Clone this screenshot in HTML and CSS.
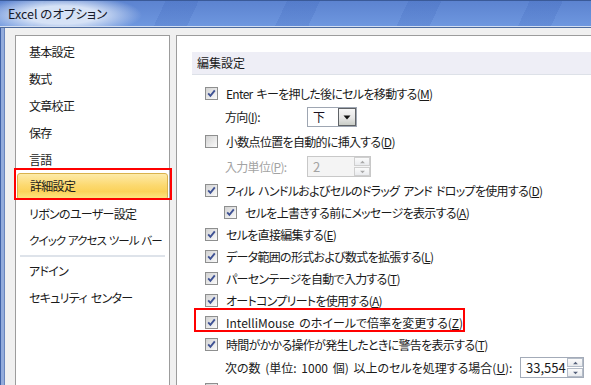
FILE: index.html
```html
<!DOCTYPE html>
<html lang="ja">
<head>
    <meta charset="UTF-8">
    <title>Excel のオプション</title>
    <link rel="stylesheet" href="styles.css">
</head>
<body>
    <div class="window">
        <div class="titlebar">Excel のオプション</div>
        <div class="frame">
            <div class="body">
                <nav class="side">
                    <div class="side-item">基本設定</div>
                    <div class="side-item">数式</div>
                    <div class="side-item">文章校正</div>
                    <div class="side-item">保存</div>
                    <div class="side-item">言語</div>
                    <div class="side-item selected">詳細設定</div>
                    <div class="side-item">リボンのユーザー設定</div>
                    <div class="side-item long">クイック アクセス ツール バー</div>
                    <div class="side-sep"></div>
                    <div class="side-item">アドイン</div>
                    <div class="side-item">セキュリティ センター</div>
                </nav>
                <main class="pane">
                    <div class="section-head">編集設定</div>
                    <div class="options">
                        <div class="row">
                            <span class="cb"><svg viewBox="0 0 11 11"><path d="M2.2 5.4 L4.4 7.8 L8.8 2.4"/></svg></span>
                            <span>Enter キーを押した後にセルを移動する(<u>M</u>)</span>
                        </div>
                        <div class="row tall field">
                            <span class="field-label">方向(<u>I</u>):</span>
                            <div class="select">
                                <span class="select-text">下</span>
                                <span class="select-btn"><svg viewBox="0 0 16 16"><path d="M4.5 6.5 h7 l-3.5 4 z"/></svg></span>
                            </div>
                        </div>
                        <div class="row tall">
                            <span class="cb"></span>
                            <span>小数点位置を自動的に挿入する(<u>D</u>)</span>
                        </div>
                        <div class="row tall field">
                            <span class="field-label disabled">入力単位(<u>P</u>):</span>
                            <div class="spin disabled">
                                <span class="spin-text">2</span>
                                <span class="spin-btns">
                                    <span class="spin-btn"><svg viewBox="0 0 8 5"><path d="M1 4 h6 l-3 -3 z"/></svg></span>
                                    <span class="spin-btn"><svg viewBox="0 0 8 5"><path d="M1 1 h6 l-3 3 z"/></svg></span>
                                </span>
                            </div>
                        </div>
                        <div class="row">
                            <span class="cb"><svg viewBox="0 0 11 11"><path d="M2.2 5.4 L4.4 7.8 L8.8 2.4"/></svg></span>
                            <span>フィル ハンドルおよびセルのドラッグ アンド ドロップを使用する(<u>D</u>)</span>
                        </div>
                        <div class="row indent">
                            <span class="cb"><svg viewBox="0 0 11 11"><path d="M2.2 5.4 L4.4 7.8 L8.8 2.4"/></svg></span>
                            <span>セルを上書きする前にメッセージを表示する(<u>A</u>)</span>
                        </div>
                        <div class="row">
                            <span class="cb"><svg viewBox="0 0 11 11"><path d="M2.2 5.4 L4.4 7.8 L8.8 2.4"/></svg></span>
                            <span>セルを直接編集する(<u>E</u>)</span>
                        </div>
                        <div class="row">
                            <span class="cb"><svg viewBox="0 0 11 11"><path d="M2.2 5.4 L4.4 7.8 L8.8 2.4"/></svg></span>
                            <span>データ範囲の形式および数式を拡張する(<u>L</u>)</span>
                        </div>
                        <div class="row">
                            <span class="cb"><svg viewBox="0 0 11 11"><path d="M2.2 5.4 L4.4 7.8 L8.8 2.4"/></svg></span>
                            <span>パーセンテージを自動で入力する(<u>T</u>)</span>
                        </div>
                        <div class="row">
                            <span class="cb"><svg viewBox="0 0 11 11"><path d="M2.2 5.4 L4.4 7.8 L8.8 2.4"/></svg></span>
                            <span>オートコンプリートを使用する(<u>A</u>)</span>
                        </div>
                        <div class="row marked">
                            <span class="cb"><svg viewBox="0 0 11 11"><path d="M2.2 5.4 L4.4 7.8 L8.8 2.4"/></svg></span>
                            <span class="latin">IntelliMouse のホイールで倍率を変更する(<u>Z</u>)</span>
                        </div>
                        <div class="row">
                            <span class="cb"><svg viewBox="0 0 11 11"><path d="M2.2 5.4 L4.4 7.8 L8.8 2.4"/></svg></span>
                            <span>時間がかかる操作が発生したときに警告を表示する(<u>T</u>)</span>
                        </div>
                        <div class="row tall field">
                            <span class="count-label">次の数 (単位: 1000 個) 以上のセルを処理する場合(<u>U</u>):</span>
                            <div class="spin">
                                <span class="spin-text">33,554</span>
                                <span class="spin-btns">
                                    <span class="spin-btn"><svg viewBox="0 0 8 5"><path d="M1 4 h6 l-3 -3 z"/></svg></span>
                                    <span class="spin-btn"><svg viewBox="0 0 8 5"><path d="M1 1 h6 l-3 3 z"/></svg></span>
                                </span>
                            </div>
                        </div>
                        <div class="row last">
                            <span class="cb"><svg viewBox="0 0 11 11"><path d="M2.2 5.4 L4.4 7.8 L8.8 2.4"/></svg></span>
                        </div>
                    </div>
                </main>
            </div>
        </div>
    </div>
</body>
</html>
```

FILE: styles.css
```css
body {
    margin: 0;
    width: 591px;
    height: 385px;
    overflow: hidden;
    font-family: "Noto Sans CJK JP", "Noto Sans", sans-serif;
    font-size: 12px;
    font-feature-settings: "palt";
    color: #1a1a1a;
}
.window {
    height: 385px;
    display: flex;
    flex-direction: column;
}
.titlebar {
    height: 25px;
    line-height: 26px;
    padding-left: 8px;
    font-size: 12.5px;
    color: #15182a;
    border-top: 1px solid #3a5a98;
    border-bottom: 1px solid #d3def0;
    background:
        radial-gradient(ellipse 80px 20px at 62px 14px, rgba(214, 226, 246, 1) 45%, rgba(214, 226, 246, 0) 100%),
        repeating-linear-gradient(115deg, rgba(255, 255, 255, 0) 0 40px, rgba(40, 80, 170, 0.14) 40px 70px, rgba(255, 255, 255, 0) 70px 110px),
        linear-gradient(#5c83d0, #6e97df);
}
.frame {
    flex: 1;
    display: flex;
    min-height: 0;
    border-top: 1px solid #4d6b9e;
    background: linear-gradient(to right, #3f62a8 0 1px, #93acdc 1px 4px, #6a86bd 4px 5px, #f0f0f0 5px);
}
.body {
    flex: 1;
    display: flex;
    gap: 6px;
    margin-left: 5px;
    padding: 7px 0 0 10px;
    background: #f0f0f0;
    min-height: 0;
}
.side {
    width: 153px;
    border: 1px solid #9c9c9c;
    border-bottom: none;
    background: #fff;
    padding-top: 2px;
    letter-spacing: -0.7px;
    word-spacing: 2px;
}
.side-item {
    height: 27px;
    line-height: 27px;
    padding-left: 13px;
    white-space: nowrap;
}
.side-item.long {
    font-size: 11.5px;
    letter-spacing: -0.9px;
    word-spacing: 1px;
}
.side-item.selected {
    position: relative;
    box-sizing: border-box;
    margin: 0 1px;
    padding-left: 12px;
    line-height: 24px;
    border: 1px solid #d9b24c;
    border-radius: 3px;
    background: linear-gradient(to bottom, #fdeaa8 0%, #fcd970 45%, #fbd25a 70%, #fde784 100%);
}
.side-item.selected::after {
    content: '';
    position: absolute;
    left: -4px;
    right: -5px;
    top: -6px;
    bottom: -1px;
    border: 2px solid #ff0000;
}
.side-sep {
    height: 2px;
    margin: 1px 4px 0;
    background: #dee3ea;
}
.pane {
    flex: 1;
    border-left: 1px solid #9c9c9c;
    border-top: 1px solid #9c9c9c;
    background: #fff;
}
.section-head {
    margin: 16px 0 0 15px;
    height: 22px;
    line-height: 22px;
    padding-left: 5px;
    background: #eeeef6;
    border-bottom: 1px solid #dde1e8;
}
.options {
    margin-top: 7px;
    letter-spacing: -0.7px;
    word-spacing: 2px;
}
.latin {
    letter-spacing: 0;
}
.row {
    height: 22px;
    display: flex;
    align-items: center;
    gap: 8px;
    padding-left: 28px;
    white-space: nowrap;
}
.row.tall {
    height: 25px;
}
.row.indent {
    padding-left: 47px;
}
.row.field {
    padding-left: 48px;
    gap: 0;
}
.row.marked {
    position: relative;
}
.row.marked::after {
    content: '';
    position: absolute;
    left: 17px;
    width: 271px;
    top: -3px;
    height: 24px;
    box-sizing: border-box;
    border: 2px solid #ff0000;
}
.row.last {
    align-items: flex-start;
    padding-top: 3px;
    box-sizing: border-box;
}
u {
    text-decoration-thickness: 1px;
    text-underline-offset: 1px;
}
.cb {
    width: 13px;
    height: 13px;
    box-sizing: border-box;
    flex: none;
    border: 1px solid #8e8f8f;
    background: linear-gradient(135deg, #d2d2d2, #fbfbfb);
    display: flex;
    align-items: center;
    justify-content: center;
}
.cb svg {
    width: 11px;
    height: 11px;
}
.cb path {
    fill: none;
    stroke: #3f5294;
    stroke-width: 1.9;
}
.field-label {
    width: 82px;
}
.disabled {
    color: #a3a3a3;
}
.select {
    width: 50px;
    height: 20px;
    box-sizing: border-box;
    border: 1px solid #9ea6b2;
    display: flex;
    align-items: center;
    justify-content: space-between;
}
.select-text {
    padding-left: 5px;
    color: #1a1020;
}
.select-btn {
    width: 18px;
    height: 18px;
    box-sizing: border-box;
    border: 1px solid #5f6266;
    background: linear-gradient(#f6f6f6 0%, #e6e6e6 55%, #c9cdc6 100%);
}
.select-btn svg {
    display: block;
    width: 16px;
    height: 16px;
}
.select-btn path {
    fill: #111;
}
.spin {
    width: 64px;
    height: 21px;
    box-sizing: border-box;
    border: 1px solid #a3abb8;
    background: #fff;
    display: flex;
    align-items: center;
    justify-content: space-between;
}
.spin.disabled {
    border-color: #c8c8c8;
    background: #f4f4f4;
}
.spin-text {
    padding-left: 5px;
    font-size: 13px;
    letter-spacing: 0;
}
.spin-btns {
    width: 16px;
    height: 19px;
    display: flex;
    flex-direction: column;
    gap: 1px;
}
.spin-btn {
    flex: 1;
    box-sizing: border-box;
    border: 1px solid #b4bcc8;
    background: linear-gradient(#fbfbfb, #e9ebee);
    display: flex;
    align-items: center;
    justify-content: center;
}
.spin-btn svg {
    width: 7px;
    height: 4px;
}
.spin-btn path {
    fill: #55607a;
}
.spin.disabled .spin-btn {
    border-color: #cfcfcf;
}
.spin.disabled .spin-btn path {
    fill: #a8a8a8;
}
.count-label {
    width: 295px;
    letter-spacing: 0;
}
```
